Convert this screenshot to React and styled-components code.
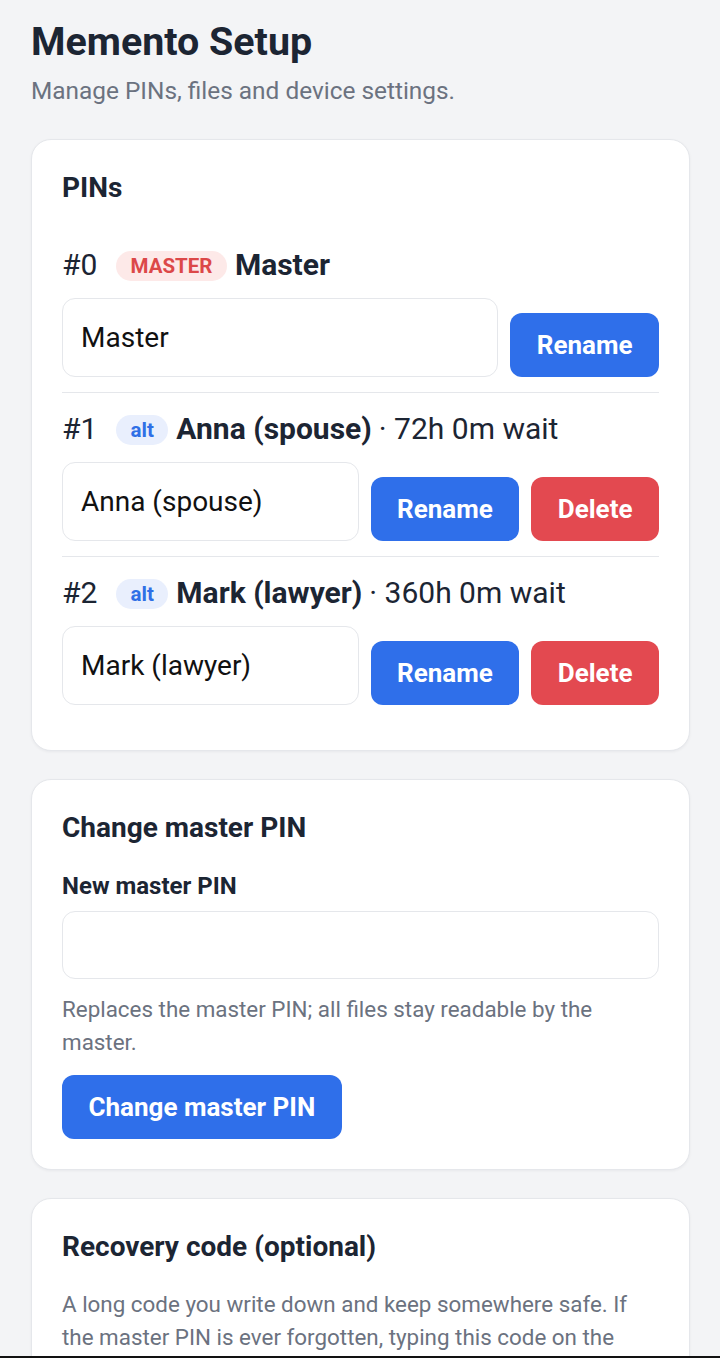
import React from "react";
import styled, { createGlobalStyle } from "styled-components";

const Global = createGlobalStyle`
  html, body { margin: 0; padding: 0; background: #f3f4f6; }
  body { font-family: Roboto, "Liberation Sans", Arial, sans-serif; color: #1f2937; -webkit-font-smoothing: antialiased; }
  * { box-sizing: border-box; }
`;

const Page = styled.main`
  padding: 18px 30px 40px 31px;
`;

const Title = styled.h1`
  margin: 0;
  font-size: 39.4px;
  line-height: 48px;
  font-weight: 700;
  color: #1c2533;
`;

const Subtitle = styled.p`
  margin: 8px 0 31px;
  font-size: 24.4px;
  line-height: 34px;
  color: #6b7280;
`;

const Card = styled.section`
  background: #fff;
  border: 1px solid #e5e7eb;
  border-radius: 20px;
  padding: 30px;
  margin-bottom: 28px;
  box-shadow: 0 1px 3px rgba(16, 24, 40, 0.05);
`;

const SectionTitle = styled.h2`
  margin: 0 0 23px;
  font-size: 28px;
  line-height: 36px;
  font-weight: 700;
  color: #1c2533;
`;

const PinRow = styled.div`
  display: flex;
  flex-direction: column;
  gap: 14px;
  padding: 15px 0;
  border-bottom: 1px solid #e5e7eb;
  &:last-child { border-bottom: none; }
`;

const PinHeader = styled.div`
  display: flex;
  align-items: center;
  gap: 8px;
  height: 40px;
  font-size: 30px;
  color: #1c2533;
  white-space: nowrap;
`;

const Index = styled.span`
  min-width: 46px;
`;

const Badge = styled.span`
  margin-top: 4px;
  padding: 0 14.5px;
  height: 30px;
  line-height: 30px;
  border-radius: 15px;
  font-size: 20.5px;
  font-weight: 700;
  color: ${(p) => (p.$kind === "master" ? "#dc4848" : "#2f6fe6")};
  background: ${(p) => (p.$kind === "master" ? "#fde9e8" : "#e9effd")};
`;

const Name = styled.strong`
  font-weight: 700;
`;

const Meta = styled.span`
  font-weight: 400;
  margin-left: -1px;
`;

const EditLine = styled.div`
  display: flex;
  align-items: flex-end;
  gap: 12px;
`;

const TextInput = styled.input`
  flex: 1;
  min-width: 0;
  height: ${(p) => p.$h || 79}px;
  padding: 0 18px;
  border: 1px solid #e5e7eb;
  border-radius: 13px;
  background: #fff;
  font-family: inherit;
  font-size: 28px;
  color: #111;
  outline: none;
`;

const Button = styled.button`
  flex: none;
  height: 64px;
  padding: 0 26.5px;
  border: none;
  border-radius: 12px;
  font-family: inherit;
  font-size: 26px;
  font-weight: 700;
  color: #fff;
  background: ${(p) => (p.$danger ? "#e34950" : "#2f6fea")};
  cursor: pointer;
`;

const FieldLabel = styled.label`
  display: block;
  margin: 2px 0 8px;
  font-size: 24px;
  line-height: 34px;
  font-weight: 700;
  color: #1c2533;
`;

const FullInput = styled(TextInput)`
  display: block;
  width: 100%;
`;

const Hint = styled.p`
  margin: 13.5px 0 15px;
  font-size: 22.4px;
  line-height: 33.6px;
  color: #6b7280;
`;

const Body = styled.p`
  margin: 22px 0 15px;
  font-size: 22.4px;
  line-height: 33.6px;
  color: #6b7280;
`;

const BottomEdge = styled.div`
  position: fixed;
  left: 0;
  right: 0;
  bottom: 0;
  height: 2.5px;
  background: #121212;
`;

const pins = [
  { id: 0, kind: "master", badge: "MASTER", name: "Master" },
  { id: 1, kind: "alt", badge: "alt", name: "Anna (spouse)", wait: "72h 0m wait" },
  { id: 2, kind: "alt", badge: "alt", name: "Mark (lawyer)", wait: "360h 0m wait" },
];

export default function App() {
  return (
    <>
      <Global />
      <Page>
        <Title>Memento Setup</Title>
        <Subtitle>Manage PINs, files and device settings.</Subtitle>

        <Card>
          <SectionTitle>PINs</SectionTitle>
          <div>
            {pins.map((p) => (
              <PinRow key={p.id}>
                <PinHeader>
                  <Index>#{p.id}</Index>
                  <Badge $kind={p.kind}>{p.badge}</Badge>
                  <Name>{p.name}</Name>
                  {p.wait && <Meta>· {p.wait}</Meta>}
                </PinHeader>
                <EditLine>
                  <TextInput defaultValue={p.name} />
                  <Button>Rename</Button>
                  {p.kind !== "master" && <Button $danger>Delete</Button>}
                </EditLine>
              </PinRow>
            ))}
          </div>
        </Card>

        <Card>
          <SectionTitle>Change master PIN</SectionTitle>
          <FieldLabel htmlFor="newpin">New master PIN</FieldLabel>
          <FullInput id="newpin" type="password" $h={68} />
          <Hint>Replaces the master PIN; all files stay readable by the master.</Hint>
          <Button>Change master PIN</Button>
        </Card>

        <Card>
          <SectionTitle>Recovery code (optional)</SectionTitle>
          <Body>
            A long code you write down and keep somewhere safe. If the master PIN is ever
            forgotten, typing this code on the device lets you set a new master PIN.
          </Body>
          <Button>Generate recovery code</Button>
        </Card>
      </Page>
      <BottomEdge />
    </>
  );
}
